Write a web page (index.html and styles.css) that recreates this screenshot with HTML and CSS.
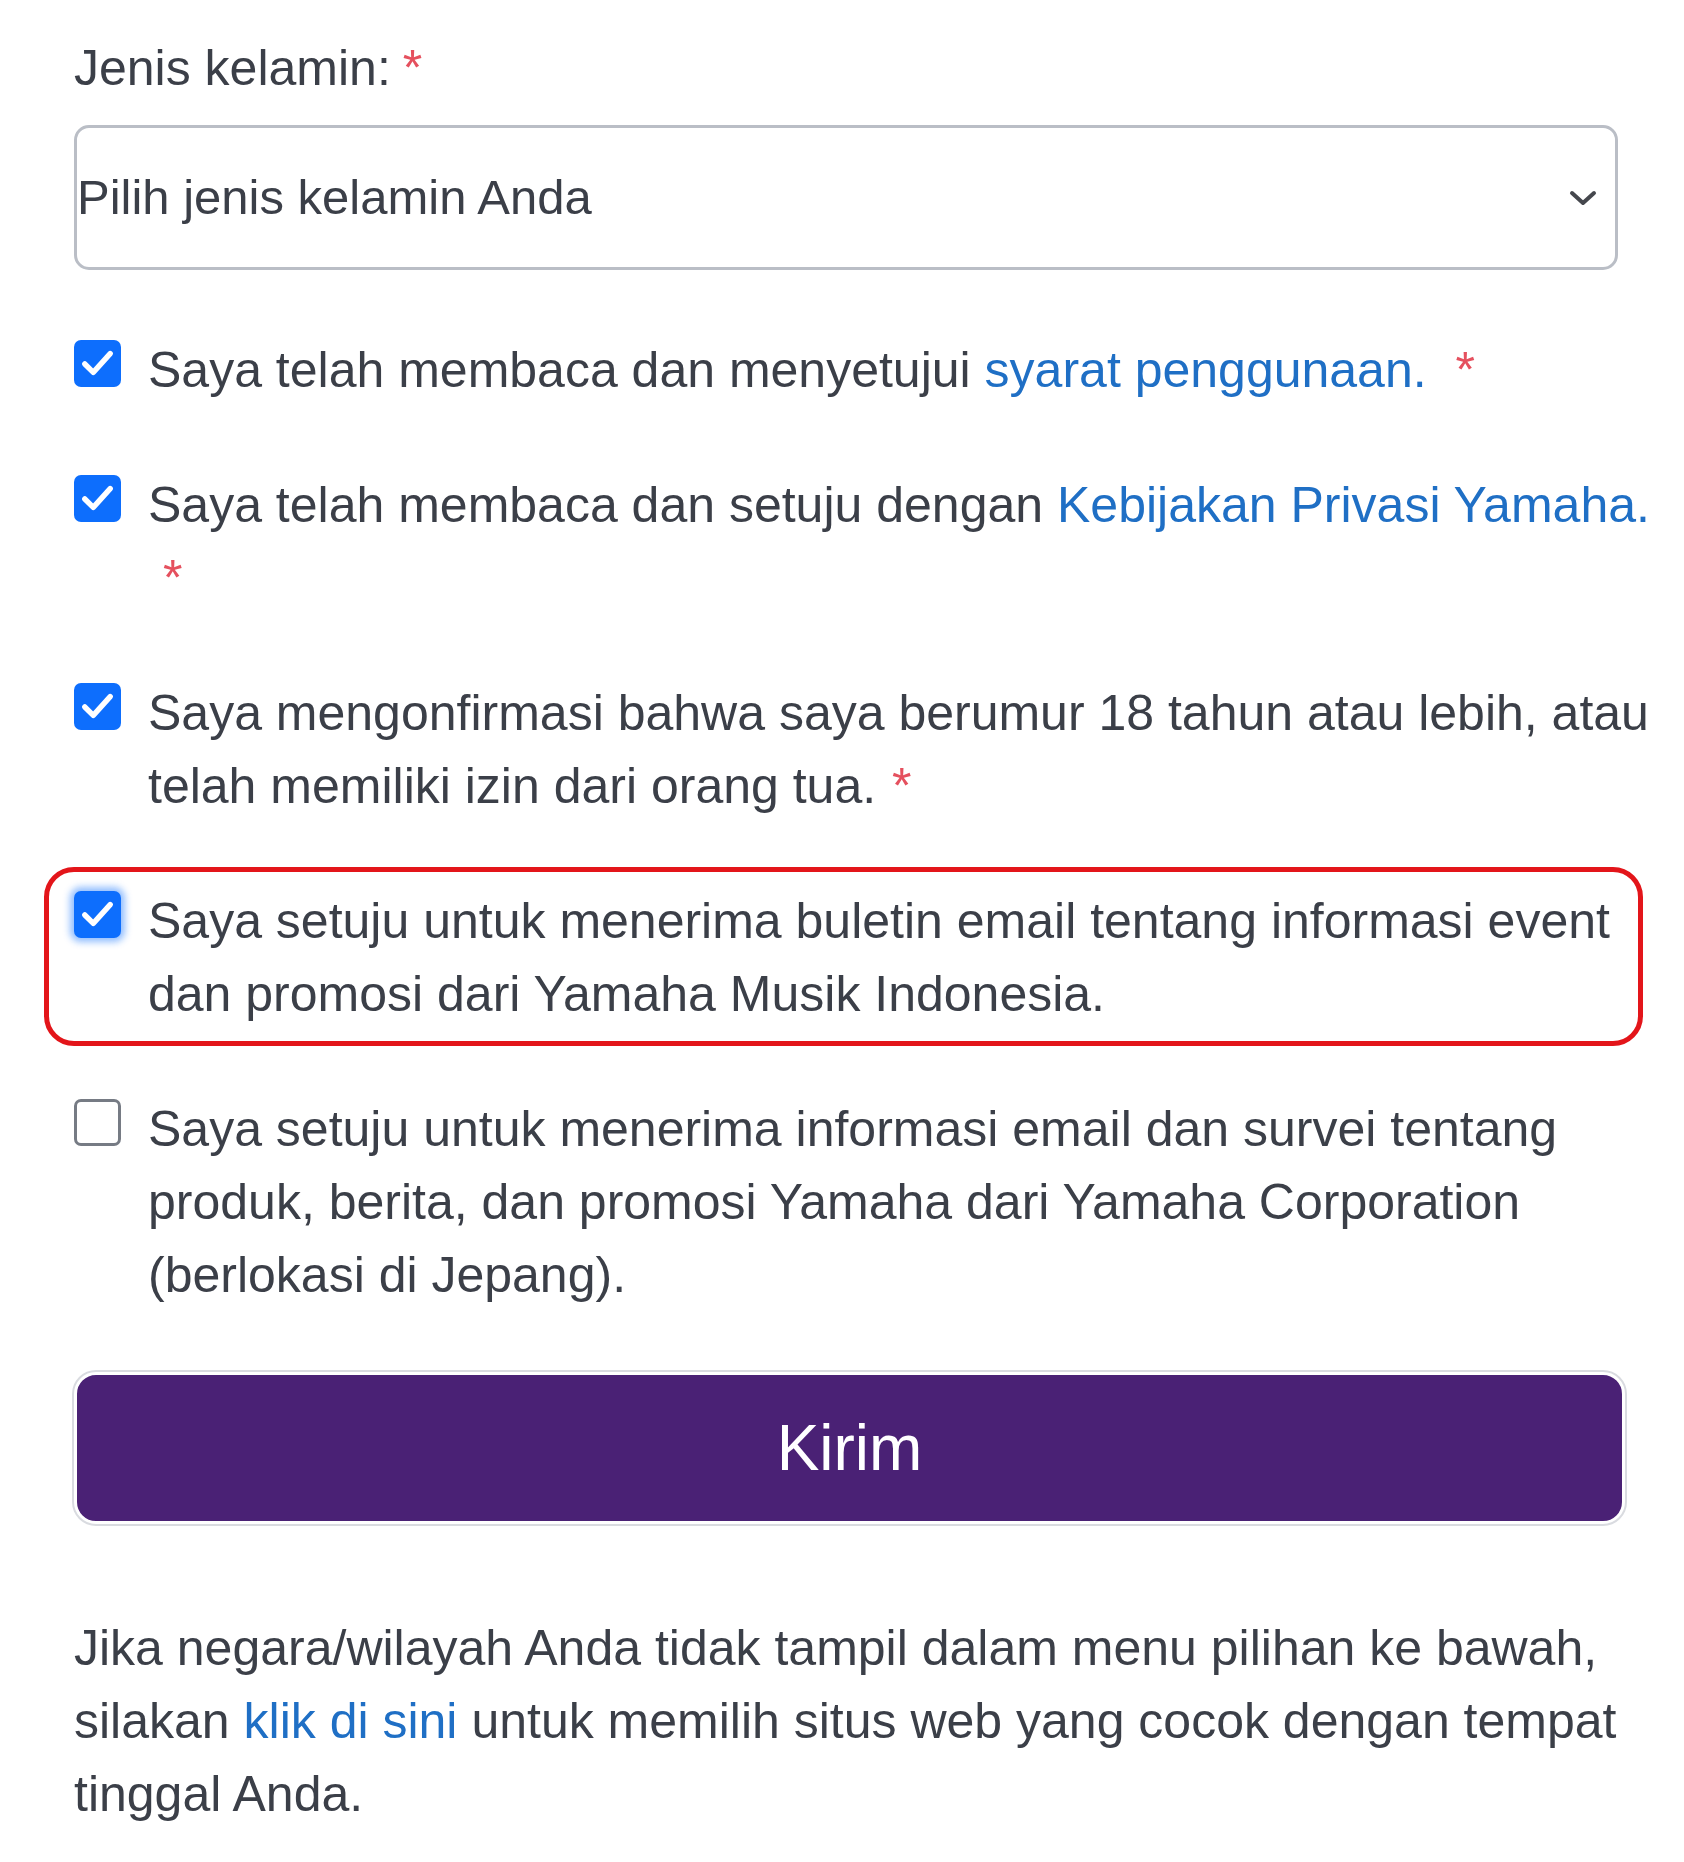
FILE: index.html
```html
<!DOCTYPE html>
<html>
<head>
    <title>Formulir Pendaftaran</title>
    <link rel="stylesheet" href="styles.css">
</head>
<body>

    <form class="signup-form">
        <label class="field-label" for="gender">Jenis kelamin:<span class="req">*</span></label>
        <div class="select-box" id="gender">
            <span>Pilih jenis kelamin Anda</span>
            <svg class="chevron" width="28" height="16" viewBox="0 0 28 16">
                <path d="M3 3 L14 13 L25 3" fill="none" stroke="#45474d" stroke-width="4" stroke-linecap="round" stroke-linejoin="round"/>
            </svg>
        </div>

        <div class="checks">
            <div class="check-row">
                <span class="box checked">
                    <svg width="47" height="47" viewBox="0 0 20 20"><path d="M4.6 10.2 L8.2 13.8 L15.4 5.8" fill="none" stroke="#fff" stroke-width="2.3" stroke-linecap="round" stroke-linejoin="round"/></svg>
                </span>
                <p class="check-text">Saya telah membaca dan menyetujui <a href="#">syarat penggunaan.</a> <span class="req wide">*</span></p>
            </div>

            <div class="check-row">
                <span class="box checked">
                    <svg width="47" height="47" viewBox="0 0 20 20"><path d="M4.6 10.2 L8.2 13.8 L15.4 5.8" fill="none" stroke="#fff" stroke-width="2.3" stroke-linecap="round" stroke-linejoin="round"/></svg>
                </span>
                <p class="check-text">Saya telah membaca dan setuju dengan <a href="#">Kebijakan Privasi Yamaha.</a> <span class="req wide">*</span></p>
            </div>

            <div class="check-row">
                <span class="box checked">
                    <svg width="47" height="47" viewBox="0 0 20 20"><path d="M4.6 10.2 L8.2 13.8 L15.4 5.8" fill="none" stroke="#fff" stroke-width="2.3" stroke-linecap="round" stroke-linejoin="round"/></svg>
                </span>
                <p class="check-text">Saya mengonfirmasi bahwa saya berumur 18 tahun atau lebih, atau telah memiliki izin dari orang tua. <span class="req tight">*</span></p>
            </div>

            <div class="check-row highlighted">
                <span class="box checked focused">
                    <svg width="47" height="47" viewBox="0 0 20 20"><path d="M4.6 10.2 L8.2 13.8 L15.4 5.8" fill="none" stroke="#fff" stroke-width="2.3" stroke-linecap="round" stroke-linejoin="round"/></svg>
                </span>
                <p class="check-text">Saya setuju untuk menerima buletin email tentang informasi event dan promosi dari Yamaha Musik Indonesia.</p>
            </div>

            <div class="check-row">
                <span class="box"></span>
                <p class="check-text">Saya setuju untuk menerima informasi email dan survei tentang produk, berita, dan promosi Yamaha dari Yamaha Corporation (berlokasi di Jepang).</p>
            </div>
        </div>

        <button type="button" class="submit-btn">Kirim</button>

        <p class="note">Jika negara/wilayah Anda tidak tampil dalam menu pilihan ke bawah, silakan <a href="#">klik di sini</a> untuk memilih situs web yang cocok dengan tempat tinggal Anda.</p>
    </form>

</body>
</html>
```

FILE: styles.css
```css
body {
    margin: 0;
    background-color: #fff;
    font-family: "Liberation Sans", Arial, sans-serif;
    font-size: 50px;
    line-height: 73px;
    color: #3b3f48;
}

.signup-form {
    width: 1544px;
    margin-left: 74px;
    padding-top: 32px;
}

.field-label {
    display: block;
    margin-bottom: 20px;
}

.req {
    color: #e5505e;
    margin-left: 12px;
}

.req.wide {
    margin-left: 15px;
}

.req.tight {
    margin-left: 2px;
}

.select-box {
    display: flex;
    align-items: center;
    justify-content: space-between;
    height: 145px;
    box-sizing: border-box;
    border: 3px solid #babec6;
    border-radius: 15px;
    padding: 0 18px 0 0;
    font-size: 49px;
}

.checks {
    margin-top: 64px;
    margin-right: -46px;
}

.check-row {
    display: flex;
    align-items: flex-start;
    gap: 27px;
    margin-bottom: 62px;
}

.check-row:last-child {
    margin-bottom: 0;
}

.check-text {
    margin: 0;
    flex: 1;
}

a {
    color: #1f6fc5;
    text-decoration: none;
}

.box {
    flex: none;
    width: 47px;
    height: 47px;
    margin-top: 6px;
    box-sizing: border-box;
    border: 3.5px solid #767b84;
    border-radius: 7px;
    background-color: #fff;
}

.box.checked {
    border: none;
    background-color: #0d6efd;
}

.box svg {
    display: block;
}

.box.focused {
    box-shadow: 0 0 7px 4px rgba(13, 110, 253, 0.45);
}

.highlighted {
    position: relative;
}

.highlighted::before {
    content: "";
    position: absolute;
    top: -18px;
    left: -30px;
    right: 21px;
    bottom: -15px;
    border: 5px solid #e3151a;
    border-radius: 30px;
    pointer-events: none;
}

.submit-btn {
    display: block;
    width: 1551px;
    height: 152px;
    margin-top: 60px;
    border: 3px solid #fff;
    border-radius: 22px;
    box-shadow: 0 0 0 2px #d9dbe0;
    background-color: #4a2175;
    color: #fff;
    font-family: "Liberation Sans", Arial, sans-serif;
    font-size: 64px;
    line-height: normal;
    cursor: pointer;
}

.note {
    margin: 88px -46px 0 0;
}
```
